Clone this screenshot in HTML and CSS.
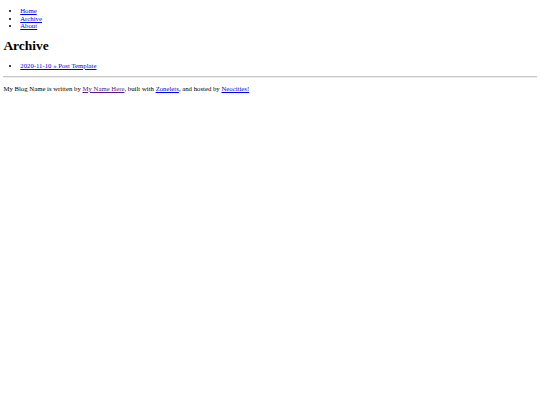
FILE: index.html
```html
<!DOCTYPE html>
<html>
<head>
<meta charset="utf-8">
<title>Archive</title>
<link rel="stylesheet" href="styles.css">
</head>
<body>
<ul class="nav">
<li><a href="#">Home</a></li>
<li><a href="#">Archive</a></li>
<li><a href="#">About</a></li>
</ul>
<h1 class="title">Archive</h1>
<ul class="posts">
<li><a href="#">2020-11-10 » Post Template</a></li>
</ul>
<hr class="rule">
<p class="footer">My Blog Name is written by <a class="visited" href="#">My Name Here</a>, built with <a href="#">Zonelets</a>, and hosted by <a href="#">Neocities!</a></p>
</body>
</html>
```

FILE: styles.css
```css
html { background: #fff; }
body {
  margin: 3.375px;
  font-family: "Liberation Serif", "Times New Roman", serif;
  font-size: 6.75px;
  line-height: 1.15;
  color: #000;
}
a { color: #0000ee; }
a.visited { color: #551a8b; }
.nav {
  margin: 3.5px 0 6.75px;
  padding-left: 16.875px;
}
.posts {
  margin: 6.75px 0;
  padding-left: 16.875px;
}
.title {
  font-size: 13.5px;
  margin: 8px 0;
}
.rule {
  margin: 3.375px 0;
  border: 0;
  border-top: 1px solid #c8c8c8;
  border-bottom: 0.5px solid #eee;
}
.footer { margin: 6.75px 0; }
```
